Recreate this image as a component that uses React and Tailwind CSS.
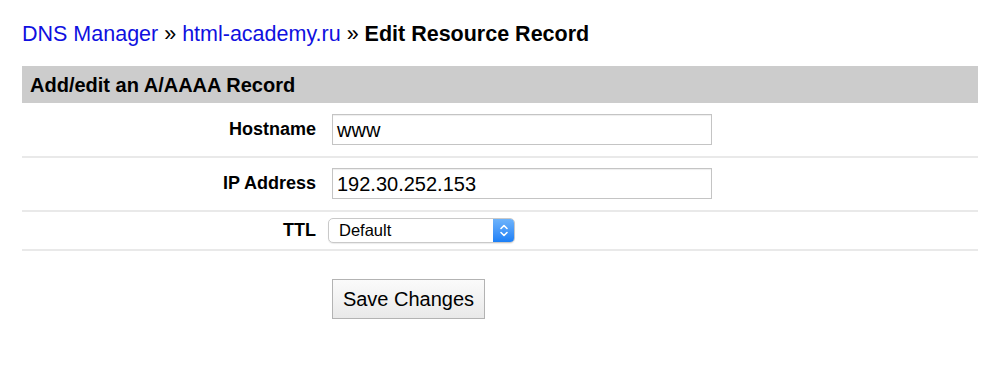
import React from "react";

function Row({ label, children, className = "" }) {
  return (
    <div className={"flex items-center border-b-2 border-[#e9e9e9] " + className}>
      <div className="w-[294px] shrink-0 text-right text-[18px] font-bold text-black">{label}</div>
      <div className="ml-4 flex items-center">{children}</div>
    </div>
  );
}

export default function App() {
  return (
    <div
      className="min-h-[370px] w-[1000px] bg-white pl-[22px] pt-[22px]"
      style={{ fontFamily: '"Liberation Sans", Arial, sans-serif' }}
    >
      <div className="text-[21.5px] leading-[24px] text-black">
        <a className="text-[#1010e0]">DNS Manager</a>
        <span> » </span>
        <a className="text-[#1010e0]">html-academy.ru</a>
        <span> » </span>
        <span className="font-bold">Edit Resource Record</span>
      </div>

      <div className="mt-5 w-[956px]">
        <div className="flex h-[37px] items-center bg-[#cccccc] px-2 text-[20px] font-bold text-black">
          Add/edit an A/AAAA Record
        </div>

        <Row label="Hostname" className="pt-[11px] pb-[11px]">
          <div className="flex h-[31px] w-[380px] items-center border border-[#c4c4c4] bg-white px-[4px] text-[20px] text-black shadow-[inset_0_1px_1px_rgba(0,0,0,0.07)]">
            www
          </div>
        </Row>

        <Row label="IP Address" className="pt-[10px] pb-[11px]">
          <div className="flex h-[31px] w-[380px] items-center border border-[#c4c4c4] bg-white px-[4px] text-[20px] text-black shadow-[inset_0_1px_1px_rgba(0,0,0,0.07)]">
            192.30.252.153
          </div>
        </Row>

        <Row label="TTL" className="pt-[5px] pb-[5px]">
          <div className="-ml-1 flex h-[25px] w-[187px] overflow-hidden rounded-[5px] border border-[#c9c9c9] bg-white shadow-[0_1px_1px_rgba(0,0,0,0.08)]">
            <div className="flex flex-1 items-center pl-[10px] text-[16.5px] text-black">Default</div>
            <div className="flex w-[21px] items-center justify-center bg-gradient-to-b from-[#6db3fb] to-[#1a7ff6]">
              <svg width="10" height="15" viewBox="0 0 10 15" fill="none">
                <path d="M2 5.5 L5 2.5 L8 5.5" stroke="white" strokeWidth="1.6" strokeLinecap="round" strokeLinejoin="round" />
                <path d="M2 9.5 L5 12.5 L8 9.5" stroke="white" strokeWidth="1.6" strokeLinecap="round" strokeLinejoin="round" />
              </svg>
            </div>
          </div>
        </Row>

        <div className="ml-[310px] mt-[28px]">
          <button className="flex h-[40px] w-[153px] items-center justify-center border border-[#b3b3b3] bg-gradient-to-b from-[#fbfbfb] to-[#e9e9e9] text-[20px] text-black">
            Save Changes
          </button>
        </div>
      </div>
    </div>
  );
}
